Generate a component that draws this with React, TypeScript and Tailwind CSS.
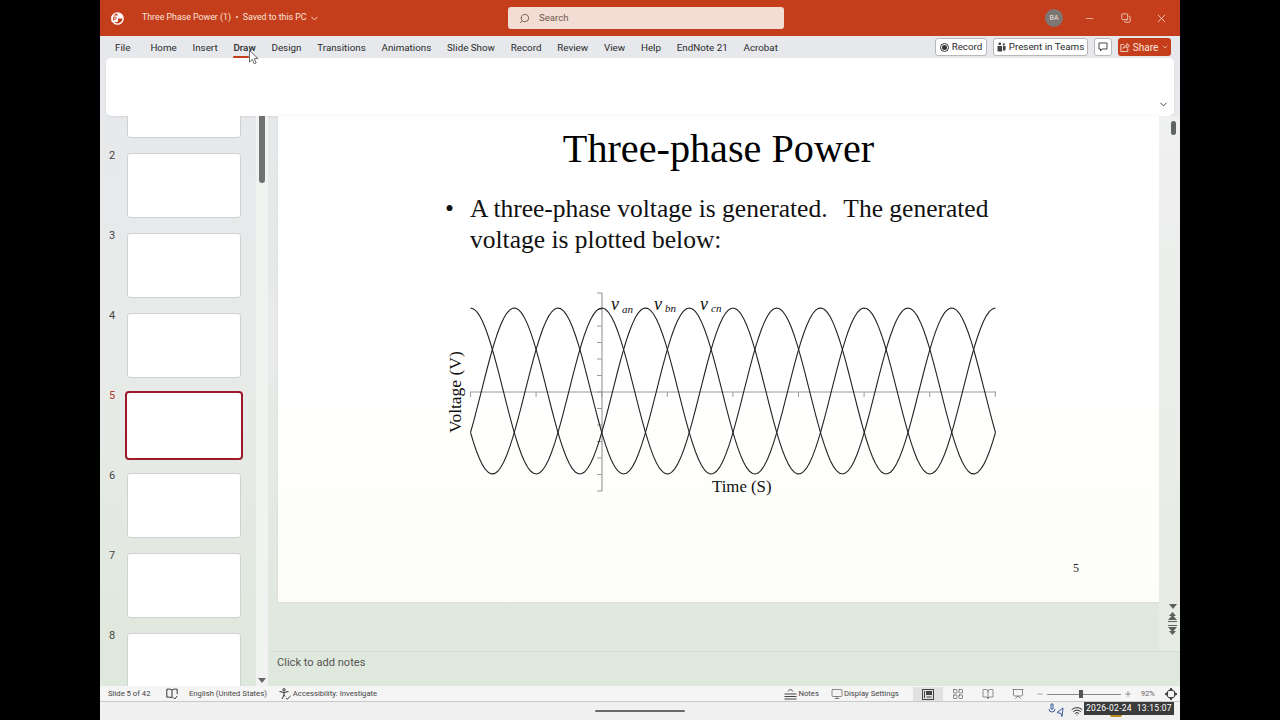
import { BookOpen, ChevronDown, Copy, LayoutGrid, Minus, Monitor, Plus, Presentation, Search, Wifi, X } from "lucide-react";

const tabs = ["File", "Home", "Insert", "Draw", "Design", "Transitions", "Animations", "Slide Show", "Record", "Review", "View", "Help", "EndNote 21", "Acrobat"];
const thumbs = [2, 3, 4, 5, 6, 7, 8];

// Three sine waves, 120 degrees apart
const wavePath = (phase: number) => {
  const pts: string[] = [];
  for (let x = 0; x <= 525; x += 3) {
    const y = 101 - 83 * Math.cos((x / 131.25) * 2 * Math.PI - phase);
    pts.push(`${x === 0 ? "M" : "L"}${(x + 25.5).toFixed(1)} ${y.toFixed(1)}`);
  }
  return pts.join(" ");
};

const Chart = () => (
  <svg width="560" height="210" viewBox="0 0 560 210" className="block">
    <line x1="25" y1="102" x2="551" y2="102" stroke="#9a9a9a" strokeWidth="1.2" />
    <line x1="157" y1="3" x2="157" y2="201" stroke="#8a8a8a" strokeWidth="1" />
    {Array.from({ length: 13 }, (_, i) => (
      <line key={i} x1="152" y1={3 + i * 16.5} x2="157" y2={3 + i * 16.5} stroke="#9a9a9a" />
    ))}
    {Array.from({ length: 9 }, (_, i) => (
      <line key={i} x1={25.5 + i * 65.6} y1="102" x2={25.5 + i * 65.6} y2="107" stroke="#9a9a9a" />
    ))}
    {[0, (2 * Math.PI) / 3, (4 * Math.PI) / 3].map((p) => (
      <path key={p} d={wavePath(p)} fill="none" stroke="#222" strokeWidth="1.1" />
    ))}
    <g fontFamily="'Liberation Serif', serif" fill="#111" fontStyle="italic">
      <text x="166" y="20" fontSize="18">v</text>
      <text x="177" y="23" fontSize="11">an</text>
      <text x="209" y="20" fontSize="18">v</text>
      <text x="220" y="22" fontSize="11">bn</text>
      <text x="255" y="20" fontSize="18">v</text>
      <text x="266" y="22" fontSize="11">cn</text>
    </g>
    <g fontFamily="'Liberation Serif', serif" fill="#111">
      <text x="267" y="202" fontSize="16.8">Time (S)</text>
      <text transform="translate(16 143) rotate(-90)" fontSize="17.5">Voltage (V)</text>
    </g>
  </svg>
);

const Thumb = ({ n }: { n: number }) => {
  const active = n === 5;
  return (
    <div className="flex h-[80px] shrink-0 items-start">
      <span className={`-mt-[4px] w-[26.5px] pl-[9px] text-[11px] leading-[14px] ${active ? "text-[#b3362b]" : "text-[#444]"}`}>{n}</span>
      {active ? (
        <div className="-ml-[2px] -mt-[2px] h-[69px] w-[118px] rounded-[4px] border-2 border-[#9c1b2b] bg-white" />
      ) : (
        <div className="h-[65px] w-[114px] rounded-[3px] border border-[#cfd2d2] bg-white" />
      )}
    </div>
  );
};

const NotesIcon = () => (
  <svg width="13" height="12" viewBox="0 0 13 12" fill="none" stroke="#444" strokeWidth="1">
    <path d="M4 3.5 6.5 1 9 3.5M0.5 6h12M0.5 8.5h12M0.5 11h12" />
  </svg>
);

const NormalViewIcon = () => (
  <svg width="12" height="11" viewBox="0 0 12 11" fill="none" stroke="#444" strokeWidth="1">
    <rect x="0.5" y="0.5" width="11" height="10" />
    <rect x="4.5" y="2.5" width="5" height="3" fill="#444" />
    <path d="M2.5 2v7M4.5 8h5" />
  </svg>
);

const FitIcon = () => (
  <svg width="12" height="12" viewBox="0 0 12 12" fill="none" stroke="#444" strokeWidth="1">
    <rect x="2.5" y="2.5" width="7" height="7" rx="1.5" />
    <path d="M6 0 4.8 1.6h2.4zM6 12l-1.2-1.6h2.4zM0 6l1.6-1.2v2.4zM12 6l-1.6-1.2v2.4z" fill="#444" />
  </svg>
);

const AccessibilityIcon = () => (
  <svg width="12" height="12" viewBox="0 0 12 12" fill="none" stroke="#333" strokeWidth="1">
    <circle cx="5" cy="1.8" r="1.2" />
    <path d="M0.5 3.5 5 4.5l4.5-1M5 4.5v2.5L3 11M5 7l1 1.5M7 10l1.3 1.2L11.5 8" />
  </svg>
);

const SpellIcon = () => (
  <svg width="12" height="12" viewBox="0 0 12 12" fill="none" stroke="#333" strokeWidth="1">
    <path d="M6 2.2C5 1 3 1 0.8 1.2v8C3 9 5 9 6 10V2.2ZM6 2.2C7 1 9 1 11.2 1.2v5M7.5 9.5l1.2 1.5 2.5-3" />
  </svg>
);

const TeamsIcon = () => (
  <svg width="9" height="10" viewBox="0 0 9 10" fill="#444">
    <circle cx="2.8" cy="1.8" r="1.4" />
    <circle cx="6.8" cy="2.4" r="1.1" />
    <path d="M0.5 4h4.6v5.5H1.4A0.9 0.9 0 0 1 0.5 8.6Z" />
    <path d="M6 4h2.6v3.2A1.5 1.5 0 0 1 6 8.2Z" />
  </svg>
);

const ShareIcon = () => (
  <svg width="10" height="10" viewBox="0 0 10 10" fill="none" stroke="#fbd9cd" strokeWidth="0.9">
    <path d="M4 2.5H0.8v7h7V6.5M3 6.5C3.3 4.5 5 3.6 7 3.6V1.5L9.5 4 7 6.3V4.8C5.5 4.7 4 5.2 3 6.5Z" />
  </svg>
);

const PptLogo = () => (
  <svg width="13" height="13" viewBox="0 0 13 13">
    <circle cx="6.5" cy="6.5" r="5.6" fill="none" stroke="#fff" strokeWidth="1.4" />
    <path d="M6.5 1v5.5H12A5.5 5.5 0 0 0 6.5 1Z" fill="#fff" />
    <rect x="0.5" y="3.5" width="6.5" height="6.5" rx="1" fill="#fff" />
    <path d="M2.6 8.6V5h1.5a1.1 1.1 0 0 1 0 2.2H2.6" fill="none" stroke="#c43e1c" strokeWidth="0.9" />
  </svg>
);

const Cursor = () => (
  <svg width="10" height="15" viewBox="0 0 10 15" className="absolute left-[149px] top-[14px]">
    <path d="M0.5 0.5v11.5l2.8-2.6 1.9 4.4 2-0.9-1.9-4.3h3.8Z" fill="#fff" stroke="#444" strokeWidth="0.8" />
  </svg>
);

export default function App() {
  return (
    <div className="flex h-screen w-screen justify-center overflow-hidden bg-black font-['Roboto',sans-serif]">
      <div className="flex h-[720px] w-[1080px] flex-col">
        {/* Title bar */}
        <header className="relative flex h-9 shrink-0 items-center bg-[#c43e1c] text-white">
          <div className="ml-[11px] flex w-[31px]"><PptLogo /></div>
          <span className="text-[8.8px] text-[#fbe3da]">Three Phase Power (1) &nbsp;•&nbsp; Saved to this PC</span>
          <ChevronDown size={11} className="ml-[2px] text-[#fbe3da]" />
          <div className="absolute left-[408px] top-[7px] flex h-[22px] w-[276px] items-center rounded-[3px] bg-[#f3dcd3] pl-[11px] text-[#6d5a52]">
            <Search size={11} className="-scale-x-100" />
            <span className="ml-[9px] text-[9.6px]">Search</span>
          </div>
          <div className="ml-auto flex items-center">
            <span className="flex h-[18px] w-[18px] items-center justify-center rounded-full bg-[#7e7673] text-[7px] text-[#e8e2df]">BA</span>
            <Minus size={11} strokeWidth={1.2} className="ml-[21px]" />
            <Copy size={10} strokeWidth={1.6} className="ml-[26px] -scale-100" />
            <X size={13} strokeWidth={1.2} className="ml-[24px] mr-[12px]" />
          </div>
        </header>

        {/* Everything on the tinted backdrop */}
        <div className="flex min-h-0 flex-1 flex-col bg-gradient-to-b from-[#e6e8ec] via-[#e8ebe9] to-[#dfe8dc]">
          <nav className="relative flex h-[22px] shrink-0 items-center pl-[15px] pr-[9px] text-[9.8px] text-[#2b2b2b]">
            {tabs.map((t) => (
              <span key={t} className={`relative mr-[15.8px] translate-y-[1px] whitespace-nowrap first:mr-[20px] ${t === "Draw" ? "font-medium" : ""}`}>
                {t}
                {t === "Draw" && <span className="absolute -bottom-[3px] left-0 h-[2px] w-[16px] rounded-full bg-[#c43e1c]" />}
              </span>
            ))}
            <Cursor />
            <div className="ml-auto flex items-center gap-[6px]">
              <span className="flex h-[18px] w-[52px] items-center justify-center gap-[3px] rounded-[3px] border border-[#b8b8b8] bg-white text-[9.8px]">
                <span className="flex h-[9px] w-[9px] items-center justify-center rounded-full border border-[#333]"><span className="h-[5px] w-[5px] rounded-full bg-[#333]" /></span>
                Record
              </span>
              <span className="flex h-[18px] w-[95px] items-center justify-center gap-[3px] rounded-[3px] border border-[#b8b8b8] bg-white text-[9.8px]">
                <TeamsIcon />
                Present in Teams
              </span>
              <span className="flex h-[18px] w-[18px] items-center justify-center rounded-[3px] border border-[#b8b8b8] bg-white">
                <svg width="10" height="10" viewBox="0 0 10 10" fill="none" stroke="#333" strokeWidth="0.9"><path d="M1 1h8v6H4L2.5 9V7H1z" /></svg>
              </span>
              <span className="flex h-[18px] w-[53px] items-center justify-center gap-[3px] rounded-[3px] bg-[#c43e1c] text-[10px] text-[#fbe3da]">
                <ShareIcon />
                Share
                <ChevronDown size={8} />
              </span>
            </div>
          </nav>

          {/* Collapsed ribbon */}
          <div className="mx-[6px] flex h-[58px] shrink-0 items-end justify-end rounded-[5px] bg-white pb-[6px] pr-[5px] shadow-[0_1px_2px_rgba(0,0,0,0.08)]">
            <ChevronDown size={11} className="text-[#333]" />
          </div>

          <main className="flex min-h-0 flex-1">
            {/* Thumbnail pane */}
            <aside className="flex w-[156px] shrink-0 flex-col overflow-hidden">
              <div className="-mt-[43px] flex flex-col">
                <div className="flex h-[80px] shrink-0">
                  <div className="ml-[26.5px] h-[65px] w-[114px] rounded-[3px] border border-[#cfd2d2] bg-white" />
                </div>
                {thumbs.map((n) => <Thumb key={n} n={n} />)}
              </div>
            </aside>
            <div className="flex w-[12px] shrink-0 flex-col items-center justify-between bg-[#f1f3f1] pb-[3px]">
              <div className="h-[67px] w-[6px] rounded-b-[3px] bg-[#6f7272]" />
              <div className="h-0 w-0 border-x-[4px] border-t-[5px] border-x-transparent border-t-[#666]" />
            </div>

            {/* Editor */}
            <section className="flex min-w-0 flex-1 flex-col">
              <div className="flex h-[535px] shrink-0">
                <div className="w-[891px] shrink-0 pl-[10px]">
                  <div className="flex h-[486px] w-[881px] flex-col bg-gradient-to-b from-white via-white to-[#fdfdf9] shadow-[0_0_2px_rgba(0,0,0,0.1)]">
                    <h1 className="mt-[10px] text-center font-['Liberation_Serif',serif] text-[40.2px] leading-[46px] text-black">Three-phase Power</h1>
                    <div className="ml-[167px] mt-[21px] flex font-['Liberation_Serif',serif] text-[25.5px] leading-[31px] text-[#111]">
                      <span className="w-[25px]">•</span>
                      <p className="w-[540px]">A three-phase voltage is generated.&nbsp; <span className="ml-[3px]">The generated</span> voltage is plotted below:</p>
                    </div>
                    <div className="ml-[167px] mt-[35px]"><Chart /></div>
                    <span className="ml-[795px] mt-[61px] font-['Liberation_Serif',serif] text-[12px] leading-[14px] text-[#222]">5</span>
                  </div>
                </div>
                {/* Right scrollbar */}
                <div className="flex flex-1 flex-col items-end justify-between bg-gradient-to-b from-[#eff0f0] to-[#e6ebe3] pb-[16px] pr-[3px]">
                  <div className="mr-[1px] mt-[5px] h-[14px] w-[5px] rounded-[3px] bg-[#5f6565]" />
                  <div className="flex flex-col items-center gap-[3px]">
                    <div className="h-0 w-0 border-x-[4px] border-t-[5px] border-x-transparent border-t-[#5c5f5c]" />
                    <svg width="9" height="10" viewBox="0 0 9 10" fill="#5c5f5c"><path d="M4.5 0 8 4H1ZM4.5 3 9 8H0ZM0 9h9v1H0Z" /></svg>
                    <svg width="9" height="10" viewBox="0 0 9 10" fill="#5c5f5c"><path d="M0 0h9v1H0ZM0 2h9L4.5 7ZM1 6h7l-3.5 4Z" /></svg>
                  </div>
                </div>
              </div>
              <div className="ml-[4px] flex flex-1 items-center border-t border-[#d5dcd0] pb-[11px] pl-[5px] text-[11.1px] text-[#555]">Click to add notes</div>
            </section>
          </main>
        </div>

        {/* Status bar */}
        <footer className="flex h-4 shrink-0 items-center border-b border-[#c9c9c9] bg-[#f5f5f5] pl-[8px] pt-[1px] text-[7.7px] text-[#444]">
          <span className="w-[45px] whitespace-nowrap">Slide 5 of 42</span>
          <span className="ml-[13px]"><SpellIcon /></span>
          <span className="ml-[11px] whitespace-nowrap">English (United States)</span>
          <span className="ml-[12px] mr-[2px]"><AccessibilityIcon /></span>
          <span>Accessibility: Investigate</span>
          <div className="ml-auto flex h-full items-center">
            <NotesIcon />
            <span className="ml-[1px]">Notes</span>
            <Monitor size={12} strokeWidth={1.2} className="ml-[12px]" />
            <span className="ml-[1px]">Display Settings</span>
            <span className="ml-[14px] flex h-full w-[30px] items-center justify-center bg-[#e1e1e1]"><NormalViewIcon /></span>
            <LayoutGrid size={12} strokeWidth={1.2} className="ml-[9px]" />
            <BookOpen size={12} strokeWidth={1.2} className="ml-[18px]" />
            <Presentation size={12} strokeWidth={1.2} className="ml-[18px]" />
            <Minus size={8} className="ml-[12px] text-[#888]" />
            <div className="relative ml-[3px] flex h-full w-[74px] items-center">
              <div className="h-px w-full bg-[#888]" />
              <div className="absolute left-[32px] top-[3px] h-[8px] w-[4px] bg-[#555]" />
            </div>
            <Plus size={8} className="ml-[3px] text-[#666]" />
            <span className="ml-[9px] text-[#666]">92%</span>
            <span className="ml-[10px] mr-[3px]"><FitIcon /></span>
          </div>
        </footer>

        {/* Taskbar strip */}
        <div className="relative flex h-[18px] shrink-0 items-center justify-center bg-[#f0f0f0]">
          <div className="h-[2px] w-[90px] rounded-full bg-[#6a6a6a]" />
          <div className="absolute right-[58px] top-[12px] h-[3px] w-[12px] rounded-b-[2px] bg-[#b88a1e]" />
          <div className="absolute right-[6px] top-0 flex h-[13px] items-center">
            <svg width="16" height="14" viewBox="0 0 16 14" fill="none" stroke="#3a5a9a" strokeWidth="1" className="mr-[7px] mt-[3px]">
              <path d="M3 1h2v5H3zM1 6a3 3 0 0 0 6 0M15 5 9 9.5l4 1 1 3z" />
            </svg>
            <Wifi size={12} className="mr-[1px] mt-[4px] text-[#333]" />
            <span className="flex h-full w-[90px] items-center justify-center whitespace-nowrap bg-[#3b3b3b] text-[8.5px] tracking-[0.3px] text-white">2026-02-24&nbsp; 13:15:07</span>
          </div>
        </div>
      </div>
    </div>
  );
}
